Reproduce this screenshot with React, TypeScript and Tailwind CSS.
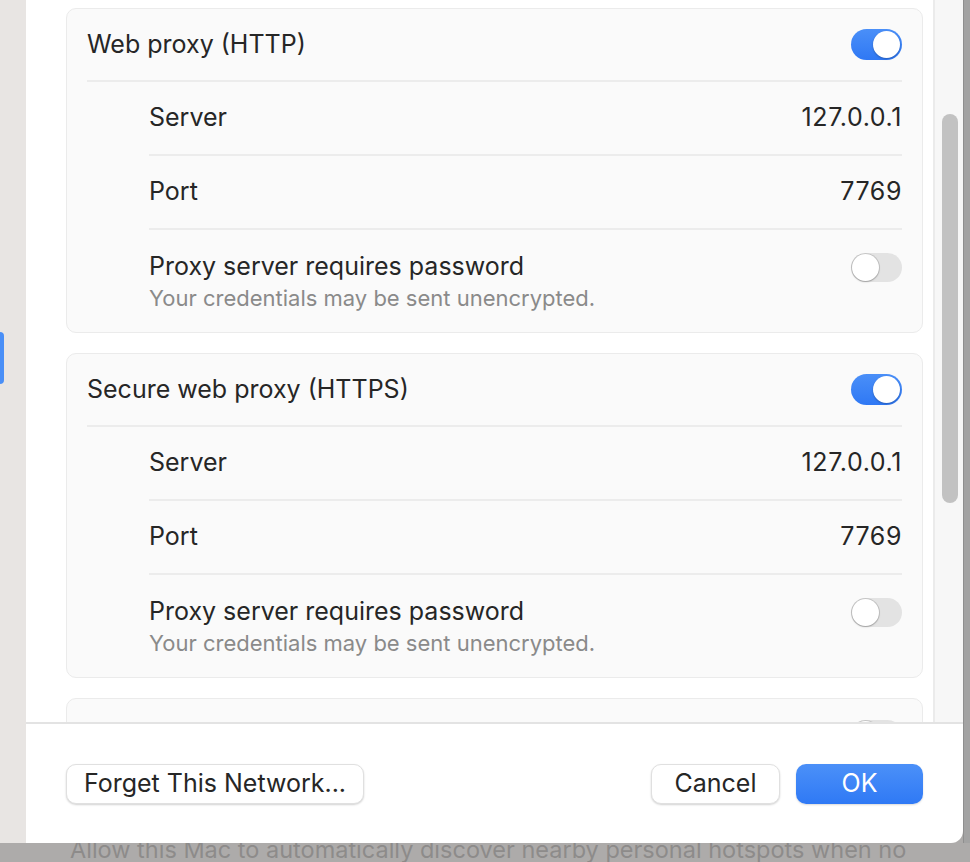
import React from "react";

type Row = { label: string; value: string };

const Toggle: React.FC<{ on: boolean }> = ({ on }) => {
    if (on) {
        return (
            <div className="w-[51px] h-[31px] rounded-full bg-gradient-to-b from-[#4a8ff8] to-[#2f78f4] flex items-center justify-end pr-[2px] shrink-0">
                <div className="w-[27px] h-[27px] rounded-full bg-white shadow-[0_1px_2px_rgba(0,0,0,0.25)]" />
            </div>
        );
    }
    return (
        <div className="w-[51px] h-[29px] rounded-full bg-[#e3e3e3] flex items-center justify-start pl-[1px] shrink-0">
            <div className="w-[27px] h-[27px] rounded-full bg-white shadow-[0_0_0_1px_rgba(0,0,0,0.12),0_1px_2px_rgba(0,0,0,0.2)]" />
        </div>
    );
};

const ProxyCard: React.FC<{ title: string; on: boolean; rows: Row[] }> = ({ title, on, rows }) => {
    return (
        <div className="w-full rounded-[10px] border border-[#ebebeb] bg-[#fafafa] px-[20px] shrink-0">
            {/* title row */}
            <div className="h-[71px] flex items-center justify-between">
                <span className="text-[25px] text-[#262626]">{title}</span>
                <Toggle on={on} />
            </div>
            <div className="border-t-2 border-[#ececec]">
                {rows.map((row, i) => (
                    <div
                        key={row.label}
                        className={
                            i === 0
                                ? "ml-[62px] h-[72px] flex items-center justify-between"
                                : "ml-[62px] h-[74px] border-t-2 border-[#ececec] flex items-center justify-between"
                        }
                    >
                        <span className="text-[25px] text-[#262626]">{row.label}</span>
                        <span className="text-[25px] tracking-[0.6px] text-[#262626]">{row.value}</span>
                    </div>
                ))}
                <div className="ml-[62px] h-[104px] border-t-2 border-[#ececec] flex items-start justify-between pt-[20px]">
                    <div className="flex flex-col">
                        <span className="text-[25px] leading-[32px] text-[#262626]">Proxy server requires password</span>
                        <span className="text-[22px] leading-[32px] text-[#8a8a8a]">Your credentials may be sent unencrypted.</span>
                    </div>
                    <div className="pt-[3px]">
                        <Toggle on={false} />
                    </div>
                </div>
            </div>
        </div>
    );
};

const rows: Row[] = [
    { label: "Server", value: "127.0.0.1" },
    { label: "Port", value: "7769" },
];

export default function App() {
    return (
        <div className="w-[970px] h-[862px] overflow-hidden bg-[#adabaa] font-['Inter',sans-serif] flex flex-col">
            <div className="h-[843px] flex shrink-0">
                {/* sidebar strip of the window behind */}
                <div className="w-[26px] h-full bg-[#e8e5e3] pt-[332px] shrink-0">
                    <div className="w-[4px] h-[52px] rounded-r-[4px] bg-[#4a8ff7]" />
                </div>

                {/* sheet */}
                <div className="w-[937px] h-full bg-white rounded-br-[12px] flex flex-col shrink-0 overflow-hidden">
                    <div className="h-[722px] flex shrink-0">
                        <div className="flex-1 pl-[40px] pr-[10px] pt-[8px] flex flex-col gap-[20px] overflow-hidden">
                            <ProxyCard title="Web proxy (HTTP)" on={true} rows={rows} />
                            <ProxyCard title="Secure web proxy (HTTPS)" on={true} rows={rows} />
                            <ProxyCard title="SOCKS proxy" on={false} rows={rows} />
                        </div>
                        <div className="w-[30px] h-full border-l-2 border-[#ebebeb] bg-[#f7f7f7] pt-[114px] pl-[7px] shrink-0">
                            <div className="w-[16px] h-[389px] rounded-full bg-[#c2c2c2]" />
                        </div>
                    </div>

                    <div className="flex-1 border-t-2 border-[#e3e3e3] px-[40px] pt-[40px] flex items-start justify-between">
                        <button className="h-[40px] w-[298px] rounded-[10px] bg-white border border-[#e0e0e0] shadow-[0_1px_2px_rgba(0,0,0,0.18)] text-[25px] text-[#262626] flex items-center justify-center">
                            Forget This Network...
                        </button>
                        <div className="flex gap-[16px]">
                            <button className="h-[40px] w-[129px] rounded-[10px] bg-white border border-[#e0e0e0] shadow-[0_1px_2px_rgba(0,0,0,0.18)] text-[25px] text-[#262626] flex items-center justify-center">
                                Cancel
                            </button>
                            <button className="h-[40px] w-[127px] rounded-[10px] bg-gradient-to-b from-[#4b90f8] to-[#2f79f5] shadow-[0_1px_2px_rgba(0,0,0,0.15)] text-[25px] text-white flex items-center justify-center">
                                OK
                            </button>
                        </div>
                    </div>
                </div>

                {/* window behind, right edge */}
                <div className="flex-1 h-full bg-[#a3a3a3] border-l border-[#8f8f8f]" />
            </div>

            {/* dimmed text of the window behind */}
            <div className="h-[19px] overflow-hidden pl-[70px] shrink-0">
                <div className="-mt-[7px] text-[23.5px] leading-[28px] text-[#8d8b8a] whitespace-nowrap">
                    Allow this Mac to automatically discover nearby personal hotspots when no
                </div>
            </div>
        </div>
    );
}
